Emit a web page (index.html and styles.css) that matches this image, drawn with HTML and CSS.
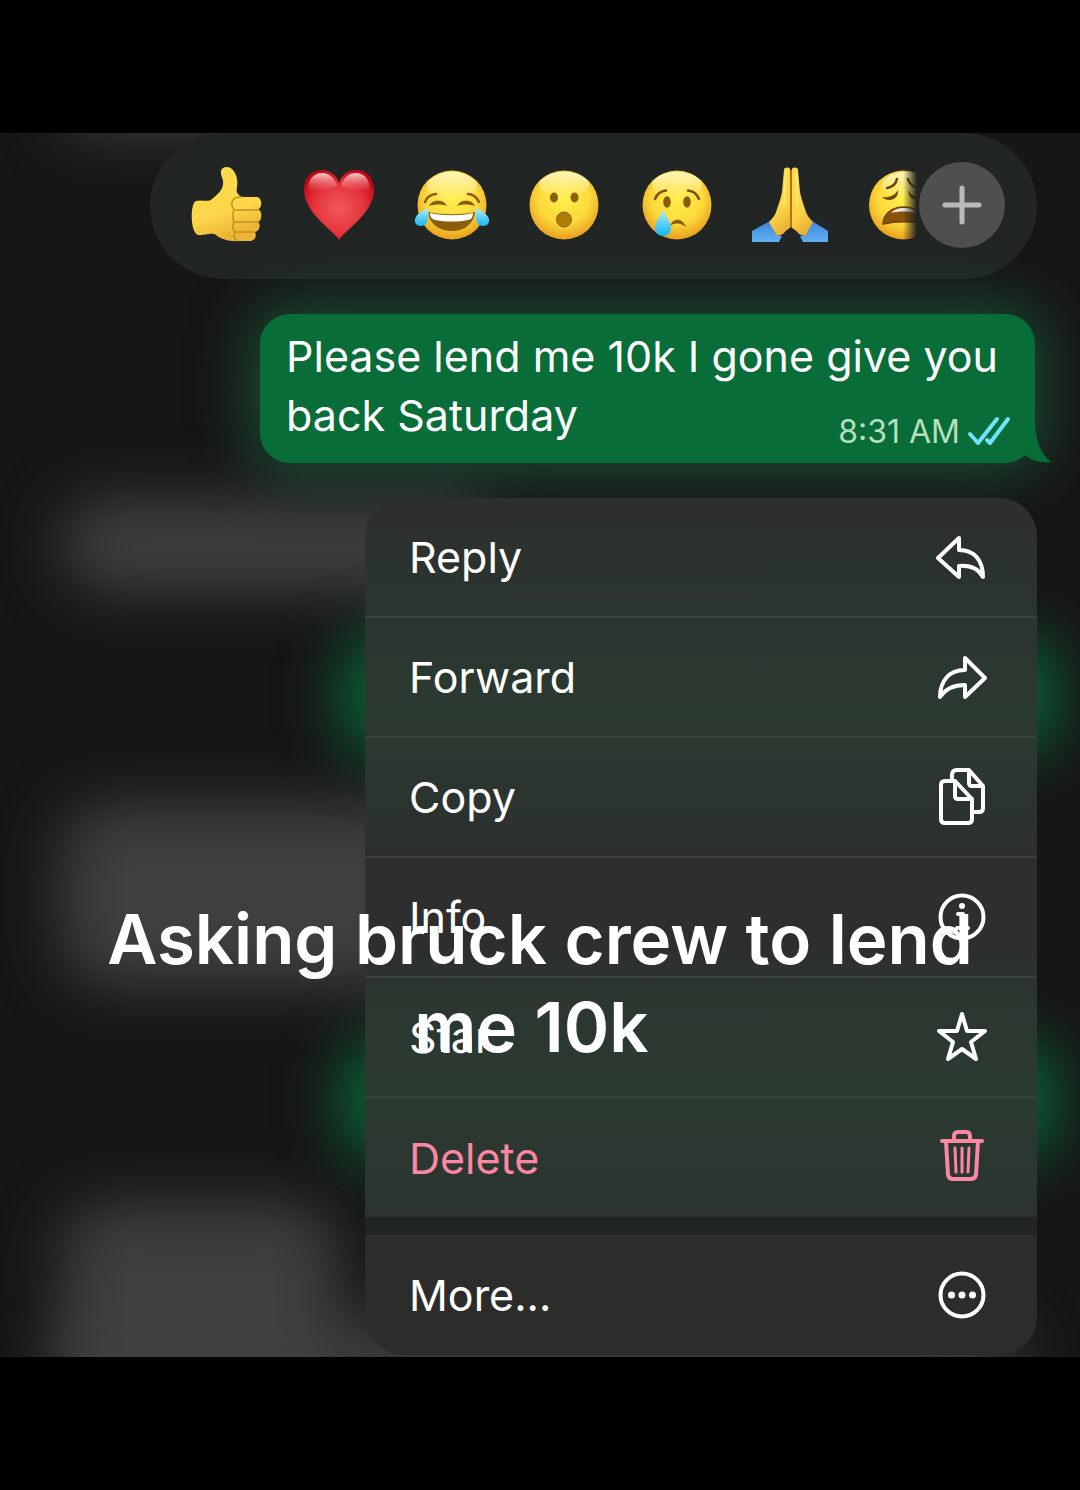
FILE: index.html
```html
<!DOCTYPE html>
<html lang="en">
<head>
    <meta charset="UTF-8">
    <meta name="viewport" content="width=device-width, initial-scale=1.0">
    <title>Message menu</title>
    <link rel="stylesheet" href="styles.css">
</head>
<body>
    <!-- shared emoji gradients -->
    <svg class="defs" aria-hidden="true">
        <defs>
            <radialGradient id="face" cx="0.5" cy="0.4" r="0.62">
                <stop offset="0" stop-color="#fff04a"/>
                <stop offset="0.6" stop-color="#fcd93c"/>
                <stop offset="1" stop-color="#e89a1c"/>
            </radialGradient>
            <linearGradient id="shine" x1="0" y1="0" x2="0" y2="1">
                <stop offset="0" stop-color="#fffbd0" stop-opacity="0.85"/>
                <stop offset="1" stop-color="#fffbd0" stop-opacity="0"/>
            </linearGradient>
            <radialGradient id="heart" cx="0.5" cy="0.55" r="0.6">
                <stop offset="0" stop-color="#f05a5c"/>
                <stop offset="0.6" stop-color="#e5343b"/>
                <stop offset="1" stop-color="#c00615"/>
            </radialGradient>
            <linearGradient id="heartShine" x1="0" y1="0" x2="0" y2="1">
                <stop offset="0" stop-color="#ffe3e3" stop-opacity="0.9"/>
                <stop offset="1" stop-color="#ff8a8a" stop-opacity="0"/>
            </linearGradient>
            <linearGradient id="skin" x1="0" y1="0" x2="0.3" y2="1">
                <stop offset="0" stop-color="#fddc4e"/>
                <stop offset="0.7" stop-color="#fcd648"/>
                <stop offset="1" stop-color="#ebb436"/>
            </linearGradient>
            <linearGradient id="tear" x1="0" y1="0" x2="0" y2="1">
                <stop offset="0" stop-color="#b5ecfb"/>
                <stop offset="0.6" stop-color="#4fcdf6"/>
                <stop offset="1" stop-color="#16b4ee"/>
            </linearGradient>
            <linearGradient id="sleeve" x1="0" y1="0" x2="0" y2="1">
                <stop offset="0" stop-color="#3d86d6"/>
                <stop offset="1" stop-color="#63b0f2"/>
            </linearGradient>
        </defs>
    </svg>

    <main class="screen">
        <div class="backdrop" aria-hidden="true">
            <div class="blob grey blob-top"></div>
            <div class="blob grey blob-1"></div>
            <div class="blob grey blob-2"></div>
            <div class="blob grey blob-3"></div>
            <div class="blob grey blob-4"></div>
            <div class="blob green blob-5"></div>
            <div class="blob green blob-6"></div>
        </div>

        <div class="reactions">
            <div class="reaction-list">
                <button class="reaction" aria-label="Thumbs up">
                    <svg viewBox="0 0 76 80">
                        <path fill="url(#skin)" d="M33 6C34 1 41 1 44 4C49 9 50 16 49 22C48 27 49 29 54 32L69 32C74 33 75 42 70 44.500C75 46 74 56 70 57C73 59 72 66 67 67C69 71 67 75 63 76L47 76C40 76 33 74 28 70C23 67 16 71 10 70C2 68 2 38 8 36C14 34 20 38 24 34C29 30 35 25 35 19C36 14 32 11 33 6Z"/>
                        <path fill="none" stroke="#c98d22" stroke-width="1.500" stroke-linecap="round" d="M44 37C45 33 49 32 53 32M46 45H70M46 57H70M47 67H66M44 37C43 41 45 43 46 45C44 49 45 54 46 57C44 61 45 65 47 67C45 71 46 74 49 76"/>
                    </svg>
                </button>
                <button class="reaction" aria-label="Heart">
                    <svg viewBox="0 0 76 80">
                        <path fill="url(#heart)" d="M38 75C33 66 4 49 3 26C3 12 11 5 21 5C30 5 36 11 38 18C40 11 46 5 55 5C65 5 73 12 73 26C72 49 43 66 38 75Z"/>
                        <path fill="url(#heartShine)" d="M7 26C7 14 13 8 21 8C29 8 34 14 36 21C28 25 14 28 7 26ZM69 26C69 14 63 8 55 8C47 8 42 14 40 21C48 25 62 28 69 26Z"/>
                    </svg>
                </button>
                <button class="reaction" aria-label="Tears of joy">
                    <svg viewBox="0 0 76 80">
                        <circle cx="38" cy="40" r="34.500" fill="url(#face)"/>
                        <ellipse cx="38" cy="22" rx="25" ry="15" fill="url(#shine)"/>
                        <path fill="none" stroke="#8a5a0c" stroke-width="2.500" stroke-linecap="round" d="M11 37C12 33 17 29 22 29M54 29C59 29 63 33 65 37"/>
                        <path fill="#8a5a0c" d="M15 41C18 34 30 34 33 41C29 39 20 39 15 41ZM43 41C46 34 58 34 61 41C56 39 47 39 43 41Z"/>
                        <path fill="#8a5d0a" d="M14 47C28 50 48 50 61 47C60 59 50 66 38 66C26 66 15 59 14 47Z"/>
                        <path fill="#fff" d="M16 48C29 51 47 51 59 48C59 52 57 55 54 55C44 57 32 57 21 55C18 54 16 52 16 48Z"/>
                        <path fill="url(#tear)" d="M14 43C15 50 15 60 8 61C2 62 -1 56 2 52C4 48 9 46 14 43ZM62 43C61 50 61 60 68 61C74 62 77 56 74 52C72 48 67 46 62 43Z"/>
                    </svg>
                </button>
                <button class="reaction" aria-label="Surprised">
                    <svg viewBox="0 0 76 80">
                        <circle cx="37" cy="40" r="34.500" fill="url(#face)"/>
                        <ellipse cx="37" cy="20" rx="25" ry="13" fill="url(#shine)"/>
                        <ellipse cx="27" cy="32.500" rx="4" ry="5" fill="#8c5d0c"/>
                        <ellipse cx="47.500" cy="32.500" rx="4" ry="5" fill="#8c5d0c"/>
                        <circle cx="37" cy="54.500" r="7.500" fill="#b07c06" stroke="#8c5d0c"/>
                    </svg>
                </button>
                <button class="reaction" aria-label="Crying">
                    <svg viewBox="0 0 76 80">
                        <circle cx="37" cy="40" r="34.500" fill="url(#face)"/>
                        <ellipse cx="37" cy="20" rx="25" ry="13" fill="url(#shine)"/>
                        <ellipse cx="27" cy="37" rx="3.800" ry="5.700" fill="#8c5d0c"/>
                        <ellipse cx="47" cy="37" rx="3.800" ry="5.700" fill="#8c5d0c"/>
                        <path fill="none" stroke="#7d4f08" stroke-width="2.500" stroke-linecap="round" d="M15 34C17 29 21 26 26 25.500M48 25.500C53 26 57 29 59 34"/>
                        <path fill="#8c5d0c" d="M30 61C33 52 43 53 46 62C41 58 35 57 30 61Z"/>
                        <path fill="url(#tear)" d="M23 44C25 51 32 58 31 64C30 69 27 71 23 71C19 71 15 68 15 63C15 57 21 51 23 44Z"/>
                    </svg>
                </button>
                <button class="reaction" aria-label="Folded hands">
                    <svg viewBox="0 0 76 80">
                        <path fill="#12265c" d="M24 71L33 66L26 78ZM52 71L43 66L50 78Z"/>
                        <path fill="url(#sleeve)" d="M-1 66L17 56L24 71L29 71L26 77H-1ZM75 66L59 56L52 71L47 71L50 77H75Z"/>
                        <path fill="url(#skin)" d="M31 5C31 2 36 2 37 4L38 62C36 64 33 65 31 68C29 70 26 71 24 71L16 57C20 53 23 49 24 44C26 38 28 33 29 27Z"/>
                        <path fill="url(#skin)" d="M45 5C45 2 40 2 39 4L38 62C40 64 43 65 45 68C47 70 50 71 52 71L60 57C56 53 53 49 52 44C50 38 48 33 47 27Z"/>
                        <path fill="none" stroke="#b96f16" stroke-width="2" d="M38 5V62"/>
                        <path fill="none" stroke="#fff08a" stroke-width="2" stroke-linecap="round" opacity="0.7" d="M33 7L31 40M43 7L45 40"/>
                    </svg>
                </button>
                <button class="reaction" aria-label="Weary">
                    <svg viewBox="0 0 76 80">
                        <circle cx="37.500" cy="40" r="34.500" fill="url(#face)"/>
                        <ellipse cx="40" cy="20" rx="24" ry="13" fill="url(#shine)"/>
                        <path fill="none" stroke="#6f4408" stroke-width="2.500" stroke-linecap="round" d="M21 23C26 22 30 19 31 14M42 14C43 18 46 21 51 23"/>
                        <path fill="#6f4408" d="M16 32C22 33 29 31 32 25C33 31 28 35 24 35C20 35 18 34 16 32ZM42 25C45 31 52 33 58 32C54 36 43 37 42 25Z"/>
                        <path fill="#8a5208" stroke="#6f4408" stroke-width="1.500" d="M17 59C17 49 26 42 38 42C50 42 57 49 58 59C45 56 30 56 17 59Z"/>
                        <path fill="#e9e4dc" d="M25 48C28 44 33 43 38 43C43 43 48 44 51 48C43 46 33 46 25 48Z"/>
                    </svg>
                </button>
            </div>
            <button class="more-reactions" aria-label="More reactions">
                <svg viewBox="0 0 86 86"><path d="M43 26V60M26 43H60"/></svg>
            </button>
        </div>

        <div class="bubble">
            <p class="message">Please lend me 10k I gone give you back Saturday</p>
            <div class="meta">
                <time>8:31 AM</time>
                <svg class="ticks" viewBox="0 0 42 30"><path d="M2 17L10 26L29 2M19 23L22 26L40 2"/></svg>
            </div>
            <svg class="tail" viewBox="0 0 30 60"><path d="M0 0H14V16C14 36 19 50 30 59C20 60 11 58 4 52L0 54Z"/></svg>
        </div>

        <div class="menu">
            <button class="item">
                <span>Reply</span>
                <svg class="icon" viewBox="0 0 60 60"><path d="M6 31L27 11V23C43 23 51 34 51 50C46 41 38 38 27 39V50Z"/></svg>
            </button>
            <button class="item">
                <span>Forward</span>
                <svg class="icon" viewBox="0 0 60 60"><path d="M53 31L33 11V23C17 23 8 34 8 50C14 41 22 38 33 38V50Z"/></svg>
            </button>
            <button class="item">
                <span>Copy</span>
                <svg class="icon" viewBox="0 0 60 60"><path d="M23 14H13Q9 14 9 18V52Q9 56 13 56H36Q40 56 40 52V32L23 14V29Q23 32 26 32H40M20 14V8Q20 3 25 3H37L51 19V41Q51 45 47 45H42M37 3V16Q37 19 40 19H51"/></svg>
            </button>
            <button class="item">
                <span>Info</span>
                <svg class="icon" viewBox="0 0 60 60"><circle cx="30" cy="30" r="21.500"/><path d="M26 27H31V41M25 41H36"/><circle class="dot" cx="30" cy="19" r="3"/></svg>
            </button>
            <button class="item">
                <span>Star</span>
                <svg class="icon" viewBox="0 0 60 60"><path d="M30 7L35 24H53L39 35L44 52L30 42L16 52L21 35L7 24H25Z"/></svg>
            </button>
            <button class="item delete">
                <span>Delete</span>
                <svg class="icon" viewBox="0 0 60 60"><path d="M10 13H50M14 13L16 47Q17 51 21 51H39Q43 51 44 47L46 13M22 13V8Q22 4 26 4H34Q38 4 38 8V13"/><path class="thin" d="M23 20L24 44M30 20V44M37 20L36 44"/></svg>
            </button>
            <button class="item more">
                <span>More...</span>
                <svg class="icon" viewBox="0 0 60 60"><circle cx="30" cy="30" r="21.500"/><circle class="dot" cx="19.500" cy="30" r="3.500"/><circle class="dot" cx="30" cy="30" r="3.500"/><circle class="dot" cx="40.500" cy="30" r="3.500"/></svg>
            </button>
        </div>

        <h1 class="caption">Asking bruck crew to lend me 10k&nbsp;</h1>
    </main>
</body>
</html>
```
FILE: styles.css
```css
* {
    box-sizing: border-box;
}
body {
    margin: 0;
    padding: 133px 0;
    background-color: #000;
    color: #fff;
    font-family: Inter, "Liberation Sans", sans-serif;
}
button {
    padding: 0;
    border: none;
    background: none;
    color: inherit;
    font: inherit;
    cursor: pointer;
}
svg {
    display: block;
    overflow: visible;
}
.defs {
    position: absolute;
    width: 0;
    height: 0;
}
.screen {
    position: relative;
    display: flex;
    flex-direction: column;
    padding: 0 43px 2px 150px;
    overflow: hidden;
    background-color: #161614;
}

/* blurred chat behind the menu */
.backdrop {
    position: absolute;
    inset: 0;
}
.blob {
    position: absolute;
    filter: blur(30px);
}
.grey {
    left: 60px;
    border-radius: 50px;
    background-color: #3f403e;
}
.green {
    left: 340px;
    right: 22px;
    border-radius: 40px;
    background-color: #0b6039;
}
.blob-top {
    top: -60px;
    width: 860px;
    height: 60px;
}
.blob-1 {
    top: 365px;
    width: 440px;
    height: 95px;
}
.blob-2 {
    top: 670px;
    width: 440px;
    height: 185px;
}
.blob-3 {
    top: 1070px;
    width: 280px;
    height: 200px;
}
.blob-4 {
    top: 1190px;
    width: 960px;
    height: 80px;
}
.blob-5 {
    top: 500px;
    height: 125px;
}
.blob-6 {
    top: 905px;
    height: 125px;
}

.reactions {
    position: relative;
    display: flex;
    align-items: center;
    justify-content: space-between;
    height: 146px;
    padding: 0 32px 2px 38px;
    border-radius: 73px;
    background-color: #212524;
}
.reaction-list {
    display: flex;
    flex: 1;
    gap: 37px;
    min-width: 0;
    padding-left: 2px;
    margin-left: -2px;
    overflow: hidden;
    -webkit-mask-image: linear-gradient(to left, transparent 2px, #000 16px);
    mask-image: linear-gradient(to left, transparent 2px, #000 16px);
}
.reaction {
    flex: none;
    width: 76px;
    height: 80px;
}
.more-reactions {
    flex: none;
    width: 86px;
    height: 86px;
    border-radius: 50%;
    background-color: #4e504f;
}
.more-reactions path {
    fill: none;
    stroke: #b9baba;
    stroke-width: 5;
    stroke-linecap: round;
}

.bubble {
    position: relative;
    margin: 35px 2px 35px 110px;
    padding: 13px 26px 18px;
    border-radius: 30px;
    background-color: #086d38;
    box-shadow: 0 0 56px 12px rgba(28, 86, 60, 0.8);
}
.message {
    margin: 0;
    font-size: 43px;
    line-height: 59px;
}
.meta {
    position: absolute;
    right: 25px;
    bottom: 12px;
    display: flex;
    align-items: center;
    gap: 8px;
    color: #b5dfbf;
    font-size: 32px;
    line-height: 38px;
}
.ticks {
    width: 42px;
    height: 30px;
    fill: none;
    stroke: #6fe3fb;
    stroke-width: 4;
    stroke-linecap: round;
    stroke-linejoin: round;
}
.tail {
    position: absolute;
    right: -16px;
    bottom: 0;
    width: 30px;
    height: 60px;
    fill: #086d38;
}

.menu {
    position: relative;
    display: flex;
    flex-direction: column;
    margin-left: 215px;
    border-radius: 38px;
    overflow: hidden;
    background: linear-gradient(#2d2f2d 0, #2a352f 120px, #2b3a30 220px, #2b332f 310px, #2d2e2d 370px, #2d2e2d 440px, #2b362f 500px, #2b3b31 600px, #2b3430 710px, #2c2d2b 750px);
}
.item {
    display: flex;
    align-items: center;
    justify-content: space-between;
    height: 120px;
    padding: 0 45px 0 44px;
    border-bottom: 2px solid #38413b;
    font-size: 43px;
    text-align: left;
}
.icon {
    width: 60px;
    height: 60px;
    fill: none;
    stroke: currentColor;
    stroke-width: 4;
    stroke-linecap: round;
    stroke-linejoin: round;
}
.dot {
    fill: currentColor;
    stroke: none;
}
.thin {
    stroke-width: 3;
}
.delete {
    height: 119px;
    border-bottom: none;
    color: #fb87a3;
}
.more {
    height: 138px;
    border-top: 18px solid #212522;
    border-bottom: none;
}

.caption {
    position: absolute;
    top: 762px;
    left: 0;
    right: 0;
    margin: 0;
    padding: 0 90px;
    font-size: 69px;
    font-weight: 600;
    line-height: 88px;
    text-align: center;
}
```
